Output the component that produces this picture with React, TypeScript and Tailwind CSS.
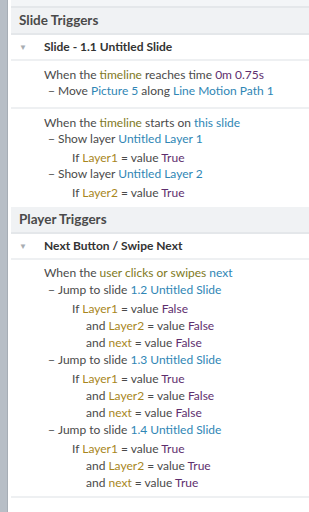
import React from 'react';

const Tl = ({ children }: { children: React.ReactNode }) => <span className="text-[#80791c]">{children}</span>;
const Bl = ({ children }: { children: React.ReactNode }) => <span className="text-[#2f86b5]">{children}</span>;
const Pu = ({ children }: { children: React.ReactNode }) => <span className="text-[#5e2e6e]">{children}</span>;
const Vr = ({ children }: { children: React.ReactNode }) => <span className="text-[#a8861c]">{children}</span>;

function Header({ title }: { title: string }) {
    return (
        <div className="h-[27px] flex items-center pl-[8px] bg-[#f0f2f4] border-b-2 border-[#e4e7ea] text-[13.5px] font-bold text-[#4a4a4a]">
            {title}
        </div>
    );
}

function Trigger({ title }: { title: string }) {
    return (
        <div className="h-[26px] flex items-center border-b-2 border-[#eef0f2] bg-white">
            <span className="w-[33px] pl-[8px] text-[8px] text-[#a8adb2]">▼</span>
            <span className="text-[12px] font-bold text-[#333]">{title}</span>
        </div>
    );
}

function Action({ children }: { children: React.ReactNode }) {
    return (
        <div className="h-[18px] flex items-end pb-[1px] pl-[4px]">
            <span className="w-[10px] text-[#555]">−</span>
            <span>{children}</span>
        </div>
    );
}

function Cond({ indent, children }: { indent: 'if' | 'and'; children: React.ReactNode }) {
    return (
        <div className={indent === 'if' ? 'h-[17px] flex items-center pl-[28px]' : 'h-[17px] flex items-center pl-[42px]'}>
            {children}
        </div>
    );
}

export default function App() {
    return (
        <div className="w-[309px] h-[512px] flex bg-white overflow-hidden text-[12px] text-[#4a4a4a]" style={{ fontFamily: 'Lato, sans-serif' }}>
            <div className="w-[8px] bg-[#b7bec6] border-r border-[#a6adb5]" />
            <div className="w-[3px] bg-white" />
            <div className="flex-1 flex flex-col">
                <div className="h-[8px] bg-[#f3f5f7] border-b-2 border-[#e4e7ea]" />
                <Header title="Slide Triggers" />
                <Trigger title="Slide - 1.1 Untitled Slide" />

                <div className="pl-[33px] pt-[5px] pb-[6px] border-b-2 border-[#eef0f2]">
                    <div className="h-[17px] flex items-center">
                        <span>When the <Tl>timeline</Tl> reaches time <Pu>0m 0.75s</Pu></span>
                    </div>
                    <Action>Move <Bl>Picture 5</Bl> along <Bl>Line Motion Path 1</Bl></Action>
                </div>

                <div className="pl-[33px] pt-[5px] pb-[6px]">
                    <div className="h-[17px] flex items-center">
                        <span>When the <Tl>timeline</Tl> starts on <Bl>this slide</Bl></span>
                    </div>
                    <Action>Show layer <Bl>Untitled Layer 1</Bl></Action>
                    <Cond indent="if"><span>If <Vr>Layer1</Vr> = value <Pu>True</Pu></span></Cond>
                    <Action>Show layer <Bl>Untitled Layer 2</Bl></Action>
                    <Cond indent="if"><span>If <Vr>Layer2</Vr> = value <Pu>True</Pu></span></Cond>
                </div>

                <Header title="Player Triggers" />
                <Trigger title="Next Button / Swipe Next" />

                <div className="pl-[33px] pt-[4px] pb-[5px] border-b-2 border-[#eef0f2]">
                    <div className="h-[17px] flex items-center">
                        <span>When the <Tl>user clicks or swipes</Tl> <Bl>next</Bl></span>
                    </div>
                    <div className="mt-[1px]">
                        <Action>Jump to slide <Bl>1.2 Untitled Slide</Bl></Action>
                        <Cond indent="if"><span>If <Vr>Layer1</Vr> = value <Pu>False</Pu></span></Cond>
                        <Cond indent="and"><span>and <Vr>Layer2</Vr> = value <Pu>False</Pu></span></Cond>
                        <Cond indent="and"><span>and <Vr>next</Vr> = value <Pu>False</Pu></span></Cond>
                    </div>
                    <div className="mt-[1px]">
                        <Action>Jump to slide <Bl>1.3 Untitled Slide</Bl></Action>
                        <Cond indent="if"><span>If <Vr>Layer1</Vr> = value <Pu>True</Pu></span></Cond>
                        <Cond indent="and"><span>and <Vr>Layer2</Vr> = value <Pu>False</Pu></span></Cond>
                        <Cond indent="and"><span>and <Vr>next</Vr> = value <Pu>False</Pu></span></Cond>
                    </div>
                    <div className="mt-[1px]">
                        <Action>Jump to slide <Bl>1.4 Untitled Slide</Bl></Action>
                        <Cond indent="if"><span>If <Vr>Layer1</Vr> = value <Pu>True</Pu></span></Cond>
                        <Cond indent="and"><span>and <Vr>Layer2</Vr> = value <Pu>True</Pu></span></Cond>
                        <Cond indent="and"><span>and <Vr>next</Vr> = value <Pu>True</Pu></span></Cond>
                    </div>
                </div>
            </div>
        </div>
    );
}
